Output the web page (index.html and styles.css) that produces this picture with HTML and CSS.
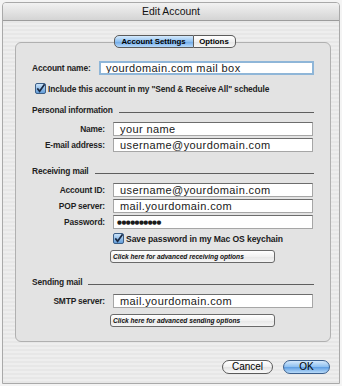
FILE: index.html
```html
<!DOCTYPE html>
<html>
<head>
<meta charset="utf-8">
<link rel="stylesheet" href="styles.css">
</head>
<body>
<div class="window">
  <div class="titlebar">Edit Account</div>
  <div class="content">
    <div class="tabs">
      <span class="tab tab-on">Account Settings</span>
      <span class="tab tab-off">Options</span>
    </div>
    <div class="panel">
      <div class="acct-row">
        <span class="lbl acct-lbl">Account name:</span>
        <div class="field field-focus">yourdomain.com mail box</div>
      </div>
      <div class="check-row include">
        <svg class="cb" width="11" height="11" viewBox="0 0 11 11"><defs><linearGradient id="g1" x1="0" y1="0" x2="0" y2="1"><stop offset="0" stop-color="#cfe6fb"/><stop offset="1" stop-color="#5d9ad8"/></linearGradient></defs><rect x="0.5" y="0.5" width="10" height="10" rx="1.5" fill="url(#g1)" stroke="#3d5f86"/><path d="M2.3 5.4 L4.6 8.3 L9.6 1.2" fill="none" stroke="#1a2a44" stroke-width="1.7"/></svg>
        <span class="lbl">Include this account in my "Send &amp; Receive All" schedule</span>
      </div>
      <div class="section sec-personal"><span class="lbl">Personal information</span><span class="rule"></span></div>
      <div class="grid g-personal">
        <span class="lbl r">Name:</span><div class="field">your name</div>
        <span class="lbl r">E-mail address:</span><div class="field">username@yourdomain.com</div>
      </div>
      <div class="section sec-recv"><span class="lbl">Receiving mail</span><span class="rule"></span></div>
      <div class="grid g-recv">
        <span class="lbl r">Account ID:</span><div class="field">username@yourdomain.com</div>
        <span class="lbl r">POP server:</span><div class="field">mail.yourdomain.com</div>
        <span class="lbl r">Password:</span><div class="field pw">●●●●●●●●●●</div>
      </div>
      <div class="check-row save">
        <svg class="cb" width="11" height="11" viewBox="0 0 11 11"><defs><linearGradient id="g2" x1="0" y1="0" x2="0" y2="1"><stop offset="0" stop-color="#cfe6fb"/><stop offset="1" stop-color="#5d9ad8"/></linearGradient></defs><rect x="0.5" y="0.5" width="10" height="10" rx="1.5" fill="url(#g2)" stroke="#3d5f86"/><path d="M2.3 5.4 L4.6 8.3 L9.6 1.2" fill="none" stroke="#1a2a44" stroke-width="1.7"/></svg>
        <span class="save-txt">Save password in my Mac OS keychain</span>
      </div>
      <div class="adv adv-recv">Click here for advanced receiving options</div>
      <div class="section sec-send"><span class="lbl">Sending mail</span><span class="rule"></span></div>
      <div class="grid g-send">
        <span class="lbl r">SMTP server:</span><div class="field">mail.yourdomain.com</div>
      </div>
      <div class="adv adv-send">Click here for advanced sending options</div>
    </div>
    <div class="footer">
      <span class="btn btn-cancel">Cancel</span>
      <span class="btn btn-ok">OK</span>
    </div>
  </div>
</div>
</body>
</html>
```

FILE: styles.css
```css
* { box-sizing: border-box; }
html, body { margin: 0; padding: 0; }
body {
  width: 342px;
  height: 386px;
  background: #f4f4f4;
  padding: 2px 2px 0 2px;
  font-family: "Liberation Sans", Arial, sans-serif;
  color: #000;
  overflow: hidden;
}
.window {
  width: 338px;
  height: 382px;
  border: 1px solid #a9a9a9;
  border-radius: 4px 4px 0 0;
  background: repeating-linear-gradient(to bottom, #eeeeee 0 2px, #e7e7e7 2px 4px);
  overflow: hidden;
}
.titlebar {
  height: 18px;
  background: linear-gradient(#f2f2f2, #d4d4d4);
  border-bottom: 1px solid #9c9c9c;
  text-align: center;
  font-size: 10.4px;
  line-height: 18px;
  color: #111;
}
.content {
  padding: 14px 9px 0 12px;
}
.tabs {
  display: flex;
  justify-content: center;
  position: relative;
  z-index: 1;
  height: 13px;
  padding-left: 4px;
}
.tab {
  height: 13px;
  border: 1px solid #5b5b5b;
  font-size: 7.8px;
  font-weight: bold;
  line-height: 11px;
  padding: 0 3px;
}
.tab-on {
  border-radius: 5px 0 0 5px;
  background: linear-gradient(#d7ebfd, #8ec0f0 50%, #6aa6e6 51%, #b8dafb);
  width: 80px;
  text-align: center;
}
.tab-off {
  border-left: none;
  border-radius: 0 5px 5px 0;
  background: linear-gradient(#ffffff, #f0f0f0 50%, #e4e4e4 51%, #f8f8f8);
  width: 42px;
  text-align: center;
}
.panel {
  margin-top: -6px;
  width: 316px;
  background: #e3e3e3;
  border: 1px solid #b0b0b0;
  border-radius: 6px;
  padding: 18px 16px 14px 16px;
}
.lbl {
  font-size: 8.4px;
  font-weight: bold;
  letter-spacing: -0.15px;
  color: #1f1f1f;
  white-space: nowrap;
}
.r { text-align: right; }
.field {
  height: 14px;
  background: #fff;
  border: 1px solid #a6a6a6;
  border-top-color: #6d6d6d;
  font-family: "Liberation Sans", Arial, sans-serif;
  font-size: 11px;
  letter-spacing: 0.4px;
  line-height: 12px;
  padding-left: 6px;
  white-space: nowrap;
  overflow: hidden;
  color: #1a1a1a;
}
.field-focus {
  border: 2px solid #8fb6d8;
  line-height: 10px;
  padding-left: 5px;
}
.pw {
  font-family: "DejaVu Sans", sans-serif;
  font-size: 5.6px;
  letter-spacing: -0.5px;
  padding-left: 3px;
}
.acct-row {
  display: flex;
  align-items: center;
  height: 14px;
}
.acct-lbl {
  width: 67px;
  flex: none;
}
.acct-row .field { width: 215px; }
.check-row {
  display: flex;
  align-items: center;
  gap: 2px;
  height: 11px;
}
.cb { flex: none; }
.include { margin-top: 8px; padding-left: 3px; }
.section {
  display: flex;
  align-items: flex-end;
  height: 10px;
}
.rule {
  flex: 1;
  height: 1px;
  background: #5e5e5e;
  margin: 0 0 2px 6px;
}
.sec-personal { margin-top: 11px; }
.sec-recv { margin-top: 14px; }
.sec-send { margin-top: 14px; }
.grid {
  display: grid;
  grid-template-columns: 73px 200px;
  column-gap: 8px;
  row-gap: 2px;
  align-items: center;
  margin-top: 7px;
}
.save { margin-top: 4px; padding-left: 81px; }
.save-txt {
  font-size: 8.6px;
  font-weight: bold;
  letter-spacing: -0.1px;
  color: #1a1a1a;
  white-space: nowrap;
}
.adv {
  margin-left: 78px;
  width: 165px;
  height: 13px;
  border: 1px solid #6a6a6a;
  border-radius: 3px;
  background: linear-gradient(#ffffff, #f1f1f1 50%, #e6e6e6 51%, #f5f5f5);
  font-size: 6.6px;
  font-style: italic;
  font-weight: bold;
  line-height: 11px;
  padding-left: 2px;
  white-space: nowrap;
  color: #111;
}
.adv-recv { margin-top: 6px; }
.adv-send { margin-top: 6px; }
.footer {
  display: flex;
  justify-content: flex-end;
  gap: 10px;
  margin-top: 18px;
  padding-right: 0;
}
.btn {
  height: 14px;
  border: 1px solid #5a5a5a;
  border-radius: 7px;
  font-size: 10px;
  line-height: 12px;
  text-align: center;
}
.btn-cancel {
  width: 51px;
  background: linear-gradient(#ffffff, #f0f0f0 50%, #e2e2e2 51%, #fafafa);
}
.btn-ok {
  width: 47px;
  border-color: #3b5f8c;
  background: linear-gradient(#d5e9fc, #8cbff0 50%, #5d9de2 51%, #b7daf9);
}
```
